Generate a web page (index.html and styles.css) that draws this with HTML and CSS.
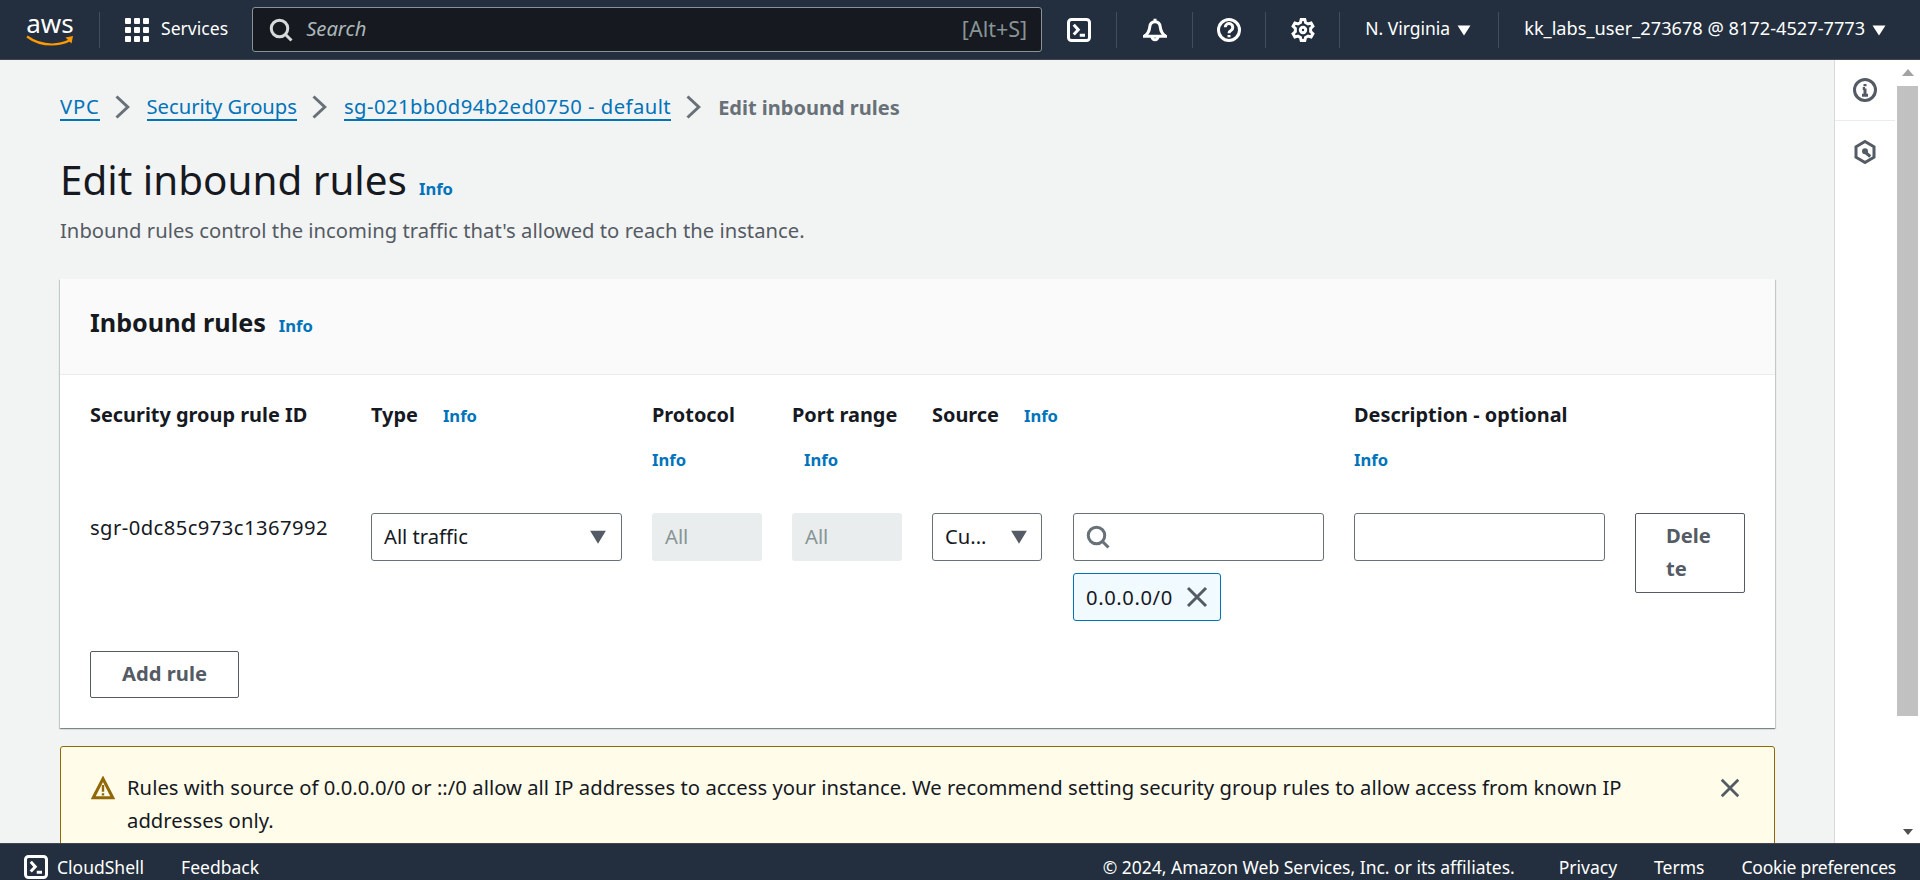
FILE: index.html
```html
<!DOCTYPE html>
<html lang="en">
<head>
	<meta charset="UTF-8">
	<title>Edit inbound rules</title>
	<link rel="stylesheet" href="styles.css">
</head>
<body>
<header class="topnav">
	<a class="logo">
		<span class="logo-text">aws</span>
		<svg class="logo-smile" viewBox="0 0 48 11"><path d="M1 1.500C9 7.500 18 9.500 26 9.500c6 0 12-1.300 18-4.200" fill="none" stroke="#f90" stroke-width="2.200"/><path d="M39.500 2.500 47 1l-1.500 7.500z" fill="#f90"/></svg>
	</a>
	<span class="sep sep-logo"></span>
	<a class="services">
		<svg class="ico-grid" viewBox="0 0 24 24" fill="#fff"><rect x="0" y="0" width="6" height="6" rx="1"/><rect x="9" y="0" width="6" height="6" rx="1"/><rect x="18" y="0" width="6" height="6" rx="1"/><rect x="0" y="9" width="6" height="6" rx="1"/><rect x="9" y="9" width="6" height="6" rx="1"/><rect x="18" y="9" width="6" height="6" rx="1"/><rect x="0" y="18" width="6" height="6" rx="1"/><rect x="9" y="18" width="6" height="6" rx="1"/><rect x="18" y="18" width="6" height="6" rx="1"/></svg>
		<span>Services</span>
	</a>
	<div class="searchbox">
		<svg class="ico" viewBox="0 0 16 16" fill="none" stroke="#d5dbdb" stroke-width="2"><circle cx="7" cy="7" r="5.500"/><path d="m15 15-4-4"/></svg>
		<span class="search-ph">Search</span>
		<span class="search-key">[Alt+S]</span>
	</div>
	<a class="nav-ico nav-ico-first">
		<svg class="ico" viewBox="0 0 16 16" fill="none" stroke="#fff" stroke-width="2"><rect x="1" y="1" width="14" height="14" rx="2"/><path d="m4.500 4.500 3 3.300-3 3.200M8.500 11.500H12"/></svg>
	</a>
	<span class="sep"></span>
	<a class="nav-ico nav-ico-bell">
		<svg class="ico" viewBox="0 0 16 16" fill="none" stroke="#fff" stroke-width="2"><path d="M.8 12.200c2.400-1.500 3.400-3.200 3.700-6.200.2-2.300 1.600-3.500 3.500-3.500s3.300 1.200 3.500 3.500c.3 3 1.300 4.700 3.700 6.200z"/><path d="M8 .5v2M6 12.500a2 2 0 1 0 4 0"/></svg>
	</a>
	<span class="sep"></span>
	<a class="nav-ico nav-ico-help">
		<svg class="ico" viewBox="0 0 16 16" fill="none" stroke="#fff" stroke-width="2"><circle cx="8" cy="8" r="7"/><path d="M5.500 6.200a2.500 2.500 0 1 1 3.800 2.100C8.500 8.800 8 9.200 8 10.200M8 11.300v1.500"/></svg>
	</a>
	<span class="sep"></span>
	<a class="nav-ico">
		<svg class="ico" viewBox="0 0 16 16" fill="none" stroke="#fff" stroke-width="2"><path d="M6.800 1h2.400l.5 2 1.700 1 2-.6 1.200 2.100-1.500 1.400v2.200l1.500 1.400-1.200 2.100-2-.6-1.700 1-.5 2H6.800l-.5-2-1.700-1-2 .6-1.200-2.100 1.500-1.400V6.900L1.400 5.500l1.200-2.100 2 .6 1.700-1z"/><circle cx="8" cy="8" r="1.800"/></svg>
	</a>
	<span class="sep"></span>
	<a class="nav-menu nav-region"><span>N. Virginia</span> <svg class="caret-sm" viewBox="0 0 16 16"><path d="M1.500 3.500h13L8 13.500z" fill="#fff"/></svg></a>
	<span class="sep"></span>
	<a class="nav-menu nav-user"><span>kk_labs_user_273678 @ 8172-4527-7773</span> <svg class="caret-sm" viewBox="0 0 16 16"><path d="M1.500 3.500h13L8 13.500z" fill="#fff"/></svg></a>
</header>

<div class="middle">
	<main class="content">
		<nav class="crumbs">
			<a class="crumb crumb-vpc">VPC</a>
			<svg class="chev" viewBox="0 0 16 16" fill="none" stroke="#687078" stroke-width="2"><path d="M5 1l7.500 7L5 15"/></svg>
			<a class="crumb">Security Groups</a>
			<svg class="chev" viewBox="0 0 16 16" fill="none" stroke="#687078" stroke-width="2"><path d="M5 1l7.500 7L5 15"/></svg>
			<a class="crumb crumb-sg">sg-021bb0d94b2ed0750 - default</a>
			<svg class="chev" viewBox="0 0 16 16" fill="none" stroke="#687078" stroke-width="2"><path d="M5 1l7.500 7L5 15"/></svg>
			<span class="crumb-current">Edit inbound rules</span>
		</nav>

		<div class="title-row">
			<h1>Edit inbound rules</h1>
			<a class="info">Info</a>
		</div>
		<p class="page-desc">Inbound rules control the incoming traffic that's allowed to reach the instance.</p>

		<section class="card">
			<div class="card-head">
				<h2>Inbound rules</h2>
				<a class="info">Info</a>
			</div>
			<div class="card-body">
				<div class="rules">
					<div class="th">Security group rule ID</div>
					<div class="th"><span>Type</span><a class="info">Info</a></div>
					<div class="th th-stack"><span>Protocol</span><a class="info">Info</a></div>
					<div class="th th-stack"><span>Port range</span><a class="info th-indent">Info</a></div>
					<div class="th th-source"><span>Source</span><a class="info">Info</a></div>
					<div class="th th-stack"><span>Description - optional</span><a class="info">Info</a></div>
					<div class="th"></div>

					<div class="rule-id">sgr-0dc85c973c1367992</div>
					<div class="select">
						<span>All traffic</span>
						<svg class="caret" viewBox="0 0 16 16"><path d="M1 2.500h14L8 14z" fill="#545b64"/></svg>
					</div>
					<div class="input-off"><span>All</span></div>
					<div class="input-off"><span>All</span></div>
					<div class="select select-source">
						<span>Cu...</span>
						<svg class="caret" viewBox="0 0 16 16"><path d="M1 2.500h14L8 14z" fill="#545b64"/></svg>
					</div>
					<div class="source-value">
						<div class="input">
							<svg class="ico" viewBox="0 0 16 16" fill="none" stroke="#687078" stroke-width="2"><circle cx="7" cy="7" r="5.500"/><path d="m15 15-4-4"/></svg>
						</div>
						<div class="token">
							<span>0.0.0.0/0</span>
							<svg class="ico" viewBox="0 0 16 16" fill="none" stroke="#545b64" stroke-width="2"><path d="m2 2 12 12M14 2 2 14"/></svg>
						</div>
					</div>
					<div class="input"></div>
					<button class="btn btn-delete" type="button">Delete</button>
				</div>
				<button class="btn btn-add" type="button">Add rule</button>
			</div>
		</section>

		<div class="flash">
			<svg class="flash-ico" viewBox="0 0 16 16" fill="none" stroke="#906806" stroke-width="2"><path d="M8 1.800 1.500 14.500h13z"/><path d="M8 6v4.500M8 11.500v1.500" stroke-width="1.600"/></svg>
			<p>Rules with source of 0.0.0.0/0 or ::/0 allow all IP addresses to access your instance. We recommend setting security group rules to allow access from known IP addresses only.</p>
			<svg class="flash-close" viewBox="0 0 16 16" fill="none" stroke="#545b64" stroke-width="2"><path d="m2 2 12 12M14 2 2 14"/></svg>
		</div>
	</main>

	<aside class="tools">
		<a class="tool tool-first">
			<svg class="ico" viewBox="0 0 16 16" fill="none" stroke="#545b64" stroke-width="2"><circle cx="8" cy="8" r="7"/><path d="M8 7v4.500M6 11.500h4M6.500 7H8M8 4v1.500"/></svg>
		</a>
		<a class="tool">
			<svg class="ico" viewBox="0 0 16 16" fill="none" stroke="#545b64" stroke-width="2"><path d="M8 1 14 4.500v7L8 15l-6-3.500v-7z"/><path d="m8 8 3.500 3" /><circle cx="8" cy="7.500" r="1" fill="#545b64"/></svg>
		</a>
	</aside>

	<div class="scrollbar">
		<span class="arrow-up"></span>
		<div class="track"><div class="thumb"></div></div>
		<span class="arrow-down"></span>
	</div>
</div>

<footer class="footer">
	<a class="foot-shell">
		<svg class="ico" viewBox="0 0 16 16" fill="none" stroke="#fff" stroke-width="2"><rect x="1" y="1" width="14" height="14" rx="2"/><path d="m4.500 4.500 3 3.300-3 3.200M8.500 11.500H12"/></svg>
		<span>CloudShell</span>
	</a>
	<a class="foot-feedback">Feedback</a>
	<span class="foot-copy">© 2024, Amazon Web Services, Inc. or its affiliates.</span>
	<a class="foot-link foot-privacy">Privacy</a>
	<a class="foot-link">Terms</a>
	<a class="foot-link foot-cookie">Cookie preferences</a>
</footer>
</body>
</html>
```

FILE: styles.css
```css
*{
	box-sizing: border-box;
}

html, body{
	height: 100%;
}

body{
	margin: 0;
	display: flex;
	flex-direction: column;
	overflow: hidden;
	font-family: "Noto Sans", "Liberation Sans", sans-serif;
	font-size: 20.2px;
	color: #16191f;
	background: #f2f3f3;
}

svg{
	display: block;
	flex: none;
}

.ico{
	width: 24px;
	height: 24px;
}

/* top bar */
.topnav{
	flex: none;
	height: 60px;
	display: flex;
	align-items: center;
	padding-left: 26px;
	background: #232f3e;
	border-bottom: 1px solid #414750;
	color: #fff;
}

.logo{
	width: 48px;
	height: 40px;
	display: flex;
	flex-direction: column;
	align-items: center;
}

.logo-text{
	font-size: 26px;
	font-weight: 400;
	line-height: 26px;
}

.logo-smile{
	width: 48px;
	height: 11px;
	margin-top: -1px;
}

.sep{
	flex: none;
	width: 1px;
	height: 36px;
	background: #414d5c;
}

.sep-logo{
	margin-left: 25px;
}

.services{
	display: flex;
	align-items: center;
	gap: 12px;
	margin-left: 25px;
	font-size: 17.6px;
}

.services span, .nav-menu span, .searchbox span{
	padding-bottom: 3px;
}

.ico-grid{
	width: 24px;
	height: 24px;
}

.searchbox{
	width: 790px;
	height: 45px;
	margin-left: 24px;
	display: flex;
	align-items: center;
	padding: 0 14px 0 16px;
	background: #16191f;
	border: 1px solid #879596;
	border-radius: 3px;
}

.search-ph{
	margin-left: 13px;
	font-style: italic;
	color: #aab7b8;
}

.search-key{
	margin-left: auto;
	font-size: 21.5px;
	color: #879596;
}

.nav-ico{
	width: 73px;
	display: flex;
	justify-content: center;
}

.nav-ico-first{
	width: 74px;
}

.nav-ico-bell{
	width: 75px;
}

.nav-ico-help{
	width: 72px;
}

.nav-menu{
	display: flex;
	align-items: center;
	gap: 6px;
	font-size: 17.5px;
}

.nav-region{
	padding: 0 26px 0 25px;
}

.nav-user{
	padding-left: 25px;
	font-size: 18.2px;
}

.caret-sm{
	width: 16px;
	height: 16px;
}

/* middle part */
.middle{
	flex: 1;
	min-height: 0;
	display: flex;
}

.content{
	flex: 1;
	min-width: 0;
	overflow: hidden;
	padding: 30px 59px 0 60px;
}

.crumbs{
	display: flex;
	align-items: center;
	height: 34px;
}

.crumb{
	color: #0073bb;
	border-bottom: 2px solid #0073bb;
	line-height: 26px;
}

.crumb-vpc{
	letter-spacing: .8px;
}

.crumb-sg{
	letter-spacing: .47px;
}

.chev{
	width: 24px;
	height: 24px;
	margin: 0 14px 0 9px;
}

.crumb-current{
	font-weight: 700;
	font-size: 20px;
	color: #687078;
}

.title-row{
	display: flex;
	align-items: baseline;
	gap: 12px;
	margin-top: 29px;
}

h1{
	margin: 0;
	font-size: 40.4px;
	font-weight: 400;
	line-height: 54px;
}

.info{
	color: #0073bb;
	font-size: 16.6px;
	font-weight: 700;
}

.page-desc{
	margin: 6px 0 0;
	color: #545b64;
	line-height: 34px;
	letter-spacing: .03px;
}

.card{
	margin-top: 32px;
	background: #fff;
	box-shadow: 0 1px 1px 0 rgba(0,28,36,.3), 1px 1px 1px 0 rgba(0,28,36,.15), -1px 1px 1px 0 rgba(0,28,36,.15);
}

.card-head{
	height: 96px;
	display: flex;
	align-items: baseline;
	gap: 13px;
	padding: 26px 0 0 30px;
	background: #fafafa;
	border-bottom: 1px solid #eaeded;
}

h2{
	margin: 0;
	font-size: 25.2px;
	font-weight: 700;
	line-height: 34px;
}

.card-body{
	padding: 23px 30px 30px;
}

.rules{
	display: grid;
	grid-template-columns: 251px 251px 110px 110px 392px 251px 110px;
	column-gap: 30px;
	align-items: start;
}

.th{
	height: 115px;
	font-size: 19.9px;
	font-weight: 700;
	line-height: 34px;
}

.th > span{
	display: inline-block;
}

.th .info{
	margin-left: 25px;
}

.th-stack .info{
	display: block;
	margin: 11px 0 0;
	line-height: 34px;
}

.th-stack .th-indent{
	margin-left: 12px;
}

.rule-id{
	line-height: 29px;
	letter-spacing: .45px;
}

.select, .input, .input-off{
	height: 48px;
	display: flex;
	align-items: center;
	padding: 0 12px;
	border-radius: 3px;
}

.select span, .input-off span{
	padding-bottom: 2px;
}

.select, .input{
	background: #fff;
	border: 1px solid #687078;
}

.select{
	justify-content: space-between;
	padding-right: 14px;
}

.caret{
	width: 18px;
	height: 18px;
}

.input-off{
	padding-left: 13px;
	background: #eaeded;
	color: #879596;
}

.select-source{
	grid-column: 5;
	grid-row: 2;
	width: 110px;
	padding-right: 13px;
}

.source-value{
	width: 251px;
	margin-left: 141px;
	grid-column: 5;
	grid-row: 2;
}

.token{
	width: 148px;
	height: 48px;
	margin-top: 12px;
	display: flex;
	align-items: center;
	gap: 12px;
	padding-left: 12px;
	background: #f1faff;
	border: 1px solid #0073bb;
	border-radius: 3px;
	letter-spacing: .6px;
}

.btn{
	font: inherit;
	font-weight: 700;
	color: #545b64;
	background: #fff;
	border: 1px solid #545b64;
	border-radius: 2px;
}

.btn-delete{
	width: 110px;
	height: 80px;
	padding: 0 30px 3px;
	line-height: 33px;
	word-break: break-all;
	text-align: left;
}

.btn-add{
	display: block;
	width: 149px;
	height: 47px;
	margin-top: 30px;
	padding-bottom: 5px;
}

.flash{
	display: flex;
	align-items: flex-start;
	margin-top: 18px;
	padding: 24px 30px 30px 30px;
	background: #fffce9;
	border: 1px solid #906806;
	border-radius: 3px;
}

.flash-ico{
	width: 24px;
	height: 24px;
	margin: 5px 12px 0 0;
}

.flash p{
	flex: 1;
	margin: 0;
	line-height: 33px;
	letter-spacing: .05px;
}

.flash-close{
	width: 22px;
	height: 22px;
	margin: 6px 3px 0 30px;
}

/* right side */
.tools{
	flex: none;
	width: 61px;
	background: #fff;
	border-left: 1px solid #d5dbdb;
}

.tool{
	display: flex;
	justify-content: center;
	align-items: center;
	height: 61px;
}

.tool-first{
	border-bottom: 1px solid #eaeded;
}

.scrollbar{
	flex: none;
	width: 25px;
	display: flex;
	flex-direction: column;
	align-items: center;
	background: #fff;
}

.arrow-up{
	margin-top: 9px;
	border: 6px solid transparent;
	border-top: 0;
	border-bottom: 7px solid #a3a3a3;
}

.track{
	flex: 1;
	width: 100%;
	padding: 10px 2px 0;
}

.thumb{
	height: 630px;
	background: #c1c1c1;
}

.arrow-down{
	margin-bottom: 8px;
	border: 5px solid transparent;
	border-bottom: 0;
	border-top: 6px solid #505050;
}

/* footer */
.footer{
	flex: none;
	height: 37px;
	display: flex;
	align-items: center;
	padding: 9px 24px 0;
	background: #232f3e;
	border-top: 1px solid #414750;
	color: #fff;
	font-size: 17.5px;
}

.foot-shell{
	display: flex;
	align-items: center;
	gap: 9px;
}

.foot-feedback{
	margin-left: 37px;
}

.foot-copy{
	margin-left: auto;
}

.foot-link{
	margin-left: 37px;
}

.foot-privacy{
	margin-left: 44px;
}

.foot-cookie{
	letter-spacing: -.2px;
}
```
